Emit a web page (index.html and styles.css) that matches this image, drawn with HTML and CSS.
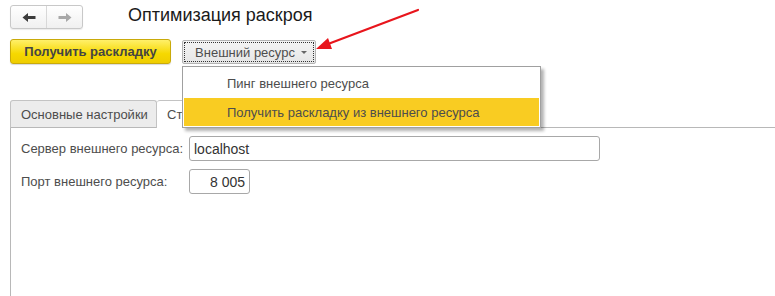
FILE: index.html
```html
<!DOCTYPE html>
<html lang="ru">
<head>
<meta charset="utf-8">
<link rel="stylesheet" href="styles.css">
</head>
<body>
<div class="page">
  <div class="header">
    <div class="nav">
      <span class="nav-btn">
        <svg width="14" height="11" viewBox="0 0 14 11"><path d="M0.5 5.5 L6 1 L6 4 L13.5 4 L13.5 7 L6 7 L6 10 Z" fill="#3c3c3c"/></svg>
      </span>
      <span class="nav-btn">
        <svg width="14" height="11" viewBox="0 0 14 11"><path d="M13.5 5.5 L8 1 L8 4 L0.5 4 L0.5 7 L8 7 L8 10 Z" fill="#a8a8a8"/></svg>
      </span>
    </div>
    <h1 class="title">Оптимизация раскроя</h1>
  </div>
  <div class="toolbar">
    <button class="btn-primary">Получить раскладку</button>
    <button class="btn-menu"><span class="focus">Внешний ресурс <span class="caret"></span></span></button>
  </div>
  <div class="tabs">
    <div class="tab">Основные настройки</div>
    <div class="tab active">Сторонний сервис</div>
    <div class="tab-fill"></div>
  </div>
  <div class="panel">
    <div class="row">
      <label class="label">Сервер внешнего ресурса:</label>
      <div class="input wide">localhost</div>
    </div>
    <div class="row">
      <label class="label">Порт внешнего ресурса:</label>
      <div class="input narrow">8 005</div>
    </div>
  </div>

  <div class="menu">
    <div class="menu-item">Пинг внешнего ресурса</div>
    <div class="menu-item hl">Получить раскладку из внешнего ресурса</div>
  </div>

  <svg class="arrow" width="120" height="50" viewBox="0 0 120 50">
    <line x1="104" y1="2" x2="14" y2="36" stroke="#e8151c" stroke-width="2.2" stroke-linecap="round"/>
    <path d="M2 41 L14 30 L18 41 Z" fill="#e8151c"/>
  </svg>
</div>
</body>
</html>
```
FILE: styles.css
```css
* { box-sizing: border-box; }
html, body { margin: 0; padding: 0; background: #fff; }
body {
  font-family: "Liberation Sans", Arial, sans-serif;
  font-size: 13px;
  color: #4d4d4d;
  width: 775px;
  height: 296px;
  overflow: hidden;
}
.page { position: relative; height: 296px; display: flex; flex-direction: column; }

.header { display: flex; align-items: center; padding: 5px 0 0 10px; height: 29px; flex-shrink: 0; }
.nav {
  display: flex;
  width: 73px; height: 24px;
  border: 1px solid #c8c8c8;
  border-radius: 3px;
  background: linear-gradient(#ffffff, #f0f0f0);
  box-shadow: 0 1px 1px rgba(0,0,0,0.08);
}
.nav-btn { flex: 1; display: flex; align-items: center; justify-content: center; }
.nav-btn + .nav-btn { border-left: 1px solid #d8d8d8; }
.title {
  margin: 0 0 0 45px;
  font-weight: normal;
  font-size: 18px;
  color: #1a1a1a;
  line-height: 22px;
  position: relative; top: -2px;
  white-space: nowrap;
}

.toolbar { display: flex; align-items: flex-start; gap: 11px; padding: 10px 0 0 10px; height: 71px; flex-shrink: 0; }
.btn-primary {
  font-family: inherit;
  font-size: 13px;
  font-weight: bold;
  color: #444;
  width: 161px; height: 25px;
  border: 1px solid #c9aa0a;
  border-radius: 3px;
  background: linear-gradient(#fff06a, #f6d800 60%, #efcd00);
  box-shadow: 0 1px 1px rgba(0,0,0,0.15);
  padding: 0;
}
.btn-menu {
  font-family: inherit;
  font-size: 13px;
  color: #4d4d4d;
  width: 134px; height: 24px;
  margin-top: 1px;
  border: 1px solid #b4b4b4;
  border-radius: 2px;
  background: linear-gradient(#f4f4f4, #e6e6e6);
  padding: 1px;
}
.focus {
  display: flex; align-items: center; justify-content: center;
  height: 100%;
  border: 1px dotted #333;
  gap: 6px;
  padding-left: 4px;
}
.caret {
  width: 0; height: 0;
  border-left: 3px solid transparent;
  border-right: 3px solid transparent;
  border-top: 3px solid #666;
  margin-top: 1px;
}

.tabs { display: flex; align-items: flex-end; padding-left: 10px; height: 28px; flex-shrink: 0; }
.tab {
  height: 28px;
  padding: 0 10px;
  display: flex; align-items: center;
  border: 1px solid #c3c3c3;
  border-bottom-color: #b8b8b8;
  border-radius: 3px 3px 0 0;
  background: #ececec;
  color: #4d4d4d;
  width: 147px;
  flex-shrink: 0;
  white-space: nowrap;
}
.tab.active { background: #fff; border-left: none; border-bottom-color: transparent; width: 160px; }
.tab-fill { flex: 1; border-bottom: 1px solid #b8b8b8; height: 1px; }

.panel {
  flex: 1;
  margin-left: 10px;
  border-left: 1px solid #b8b8b8;
  padding: 8px 0 0 10px;
  display: flex; flex-direction: column; gap: 8px;
}
.row { display: flex; align-items: center; }
.label { width: 168px; color: #4d4d4d; white-space: nowrap; }
.input {
  height: 25px;
  border: 1px solid #a8a8a8;
  border-radius: 3px;
  padding: 0 4px;
  display: flex; align-items: center;
  color: #333;
  font-size: 14px;
}
.input.wide { width: 411px; }
.input.narrow { width: 61px; justify-content: flex-end; }

.menu {
  position: absolute;
  left: 182px; top: 66px;
  width: 359px; height: 62px;
  background: #fff;
  border: 1px solid #a0a0a0;
  box-shadow: 3px 3px 3px rgba(0,0,0,0.3);
  padding: 1px;
  display: flex; flex-direction: column;
}
.menu-item { height: 30px; display: flex; align-items: center; padding-left: 43px; color: #4d4d4d; white-space: nowrap; }
.menu-item.hl { background: #f9cc22; height: 28px; }

.arrow { position: absolute; left: 314px; top: 8px; }
```
